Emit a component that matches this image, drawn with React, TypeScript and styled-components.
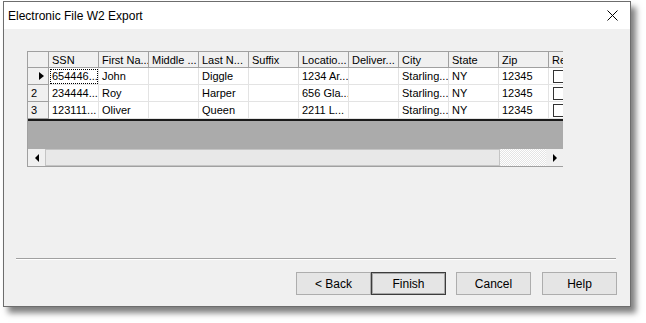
import React from 'react';
import styled, { createGlobalStyle } from 'styled-components';

const GlobalStyle = createGlobalStyle`
  html, body {
    margin: 0;
    padding: 0;
    background: #fff;
  }
  body {
    font-family: "Liberation Sans", Arial, sans-serif;
    font-size: 11px;
    color: #000;
  }
`;

const Desktop = styled.div`
  width: 646px;
  height: 323px;
  overflow: hidden;
  padding: 1px 0 0 3px;
  box-sizing: border-box;
`;

const Window = styled.div`
  width: 628px;
  height: 306px;
  box-sizing: border-box;
  border: 1px solid #6d6d6d;
  background: #f0f0f0;
  display: flex;
  flex-direction: column;
  box-shadow: 5px 6px 6px rgba(0, 0, 0, 0.5);
`;

const TitleBar = styled.div`
  height: 27px;
  background: #fff;
  display: flex;
  align-items: center;
  justify-content: space-between;
  padding: 0 12px 0 4px;
  font-size: 12px;
`;

const Client = styled.div`
  flex: 1;
  display: flex;
  flex-direction: column;
`;

const Grid = styled.div`
  margin: 22px 0 0 23px;
  width: 536px;
  height: 116px;
  box-sizing: border-box;
  border: 1px solid #a0a0a0;
  border-right: none;
  display: flex;
  flex-direction: column;
  overflow: hidden;
`;

const Row = styled.div<{ $header?: boolean }>`
  display: flex;
  height: ${p => (p.$header ? 16 : 17)}px;
  flex: 0 0 auto;
  background: ${p => (p.$header ? '#f0f0f0' : '#fff')};
`;

const Cell = styled.div<{ $header?: boolean; $focus?: boolean }>`
  flex: 0 0 50px;
  box-sizing: border-box;
  display: flex;
  align-items: center;
  padding-left: 3px;
  white-space: nowrap;
  overflow: hidden;
  border-right: 1px solid ${p => (p.$header ? '#a0a0a0' : '#e3e3e3')};
  border-bottom: 1px solid ${p => (p.$header ? '#a0a0a0' : '#e3e3e3')};
  outline: ${p => (p.$focus ? '1px dotted #000' : 'none')};
  outline-offset: -2px;
`;

const RowHead = styled.div`
  flex: 0 0 21px;
  box-sizing: border-box;
  display: flex;
  align-items: center;
  padding-left: 3px;
  background: #f0f0f0;
  border-right: 1px solid #a0a0a0;
  border-bottom: 1px solid #a0a0a0;
`;

const Pointer = styled.span`
  margin-left: auto;
  margin-right: 4px;
  width: 0;
  height: 0;
  border-left: 5px solid #000;
  border-top: 4px solid transparent;
  border-bottom: 4px solid transparent;
`;

const Check = styled.span`
  width: 13px;
  height: 13px;
  box-sizing: border-box;
  margin-left: 1px;
  border: 1px solid #333;
  background: #fff;
  flex: 0 0 auto;
`;

const EndLine = styled.div`
  height: 2px;
  background: #1a1a1a;
  flex: 0 0 auto;
`;

const Empty = styled.div`
  flex: 1;
  background: #ababab;
`;

const ScrollBar = styled.div`
  height: 17px;
  flex: 0 0 auto;
  display: flex;
  background: #f0f0f0;
`;

const ArrowBtn = styled.div`
  flex: 0 0 17px;
  display: flex;
  align-items: center;
  justify-content: center;
  background: #f0f0f0;
`;

const Arrow = styled.span<{ $dir: 'left' | 'right' }>`
  width: 0;
  height: 0;
  border-top: 4px solid transparent;
  border-bottom: 4px solid transparent;
  ${p => (p.$dir === 'left' ? 'border-right: 4px solid #000;' : 'border-left: 4px solid #000;')}
`;

const Thumb = styled.div`
  flex: 0 0 455px;
  box-sizing: border-box;
  background: #e8e8e8;
  border: 1px solid #c4c4c4;
`;

const Track = styled.div`
  flex: 1;
  background-color: #f0f0f0;
  background-image: repeating-conic-gradient(#ffffff 0 25%, #e4e4e4 0 50%);
  background-size: 2px 2px;
`;

const Separator = styled.div`
  margin: auto 14px 0 12px;
  border-top: 1px solid #a0a0a0;
  border-bottom: 1px solid #fff;
`;

const ButtonRow = styled.div`
  display: flex;
  justify-content: flex-end;
  padding: 12px 13px 11px 0;
`;

const Button = styled.button<{ $default?: boolean; $gap?: number }>`
  width: 75px;
  height: 23px;
  margin-left: ${p => p.$gap ?? 0}px;
  box-sizing: border-box;
  font-family: "Liberation Sans", Arial, sans-serif;
  font-size: 12px;
  color: #000;
  background: #e5e5e5;
  border: 1px solid ${p => (p.$default ? '#3c3c3c' : '#adadad')};
  box-shadow: ${p => (p.$default ? 'inset 0 0 0 1px #a8a8a8' : 'none')};
  padding: 0;
`;

const columns = ['SSN', 'First Na...', 'Middle ...', 'Last N...', 'Suffix', 'Locatio...', 'Deliver...', 'City', 'State', 'Zip', 'Re'];

const rows = [
  ['654446...', 'John', '', 'Diggle', '', '1234 Ar...', '', 'Starling...', 'NY', '12345'],
  ['234444...', 'Roy', '', 'Harper', '', '656 Gla...', '', 'Starling...', 'NY', '12345'],
  ['123111...', 'Oliver', '', 'Queen', '', '2211 L...', '', 'Starling...', 'NY', '12345'],
];

const CloseIcon = () => (
  <svg width="11" height="11" viewBox="0 0 11 11">
    <path d="M0.5 0.5 L10.5 10.5 M10.5 0.5 L0.5 10.5" stroke="#000" strokeWidth="1" fill="none" />
  </svg>
);

export default function App() {
  return (
    <>
      <GlobalStyle />
      <Desktop>
        <Window>
          <TitleBar>
            <span>Electronic File W2 Export</span>
            <CloseIcon />
          </TitleBar>
          <Client>
            <Grid>
              <Row $header>
                <RowHead />
                {columns.map(c => (
                  <Cell $header key={c}>{c}</Cell>
                ))}
              </Row>
              {rows.map((r, i) => (
                <Row key={i}>
                  <RowHead>{i === 0 ? <Pointer /> : i + 1}</RowHead>
                  {r.map((v, j) => (
                    <Cell key={j} $focus={i === 0 && j === 0}>{v}</Cell>
                  ))}
                  <Cell>
                    <Check />
                  </Cell>
                </Row>
              ))}
              <EndLine />
              <Empty />
              <ScrollBar>
                <ArrowBtn><Arrow $dir="left" /></ArrowBtn>
                <Thumb />
                <Track />
                <ArrowBtn><Arrow $dir="right" /></ArrowBtn>
              </ScrollBar>
            </Grid>
            <Separator />
            <ButtonRow>
              <Button>&lt; Back</Button>
              <Button $default>Finish</Button>
              <Button $gap={10}>Cancel</Button>
              <Button $gap={11}>Help</Button>
            </ButtonRow>
          </Client>
        </Window>
      </Desktop>
    </>
  );
}
